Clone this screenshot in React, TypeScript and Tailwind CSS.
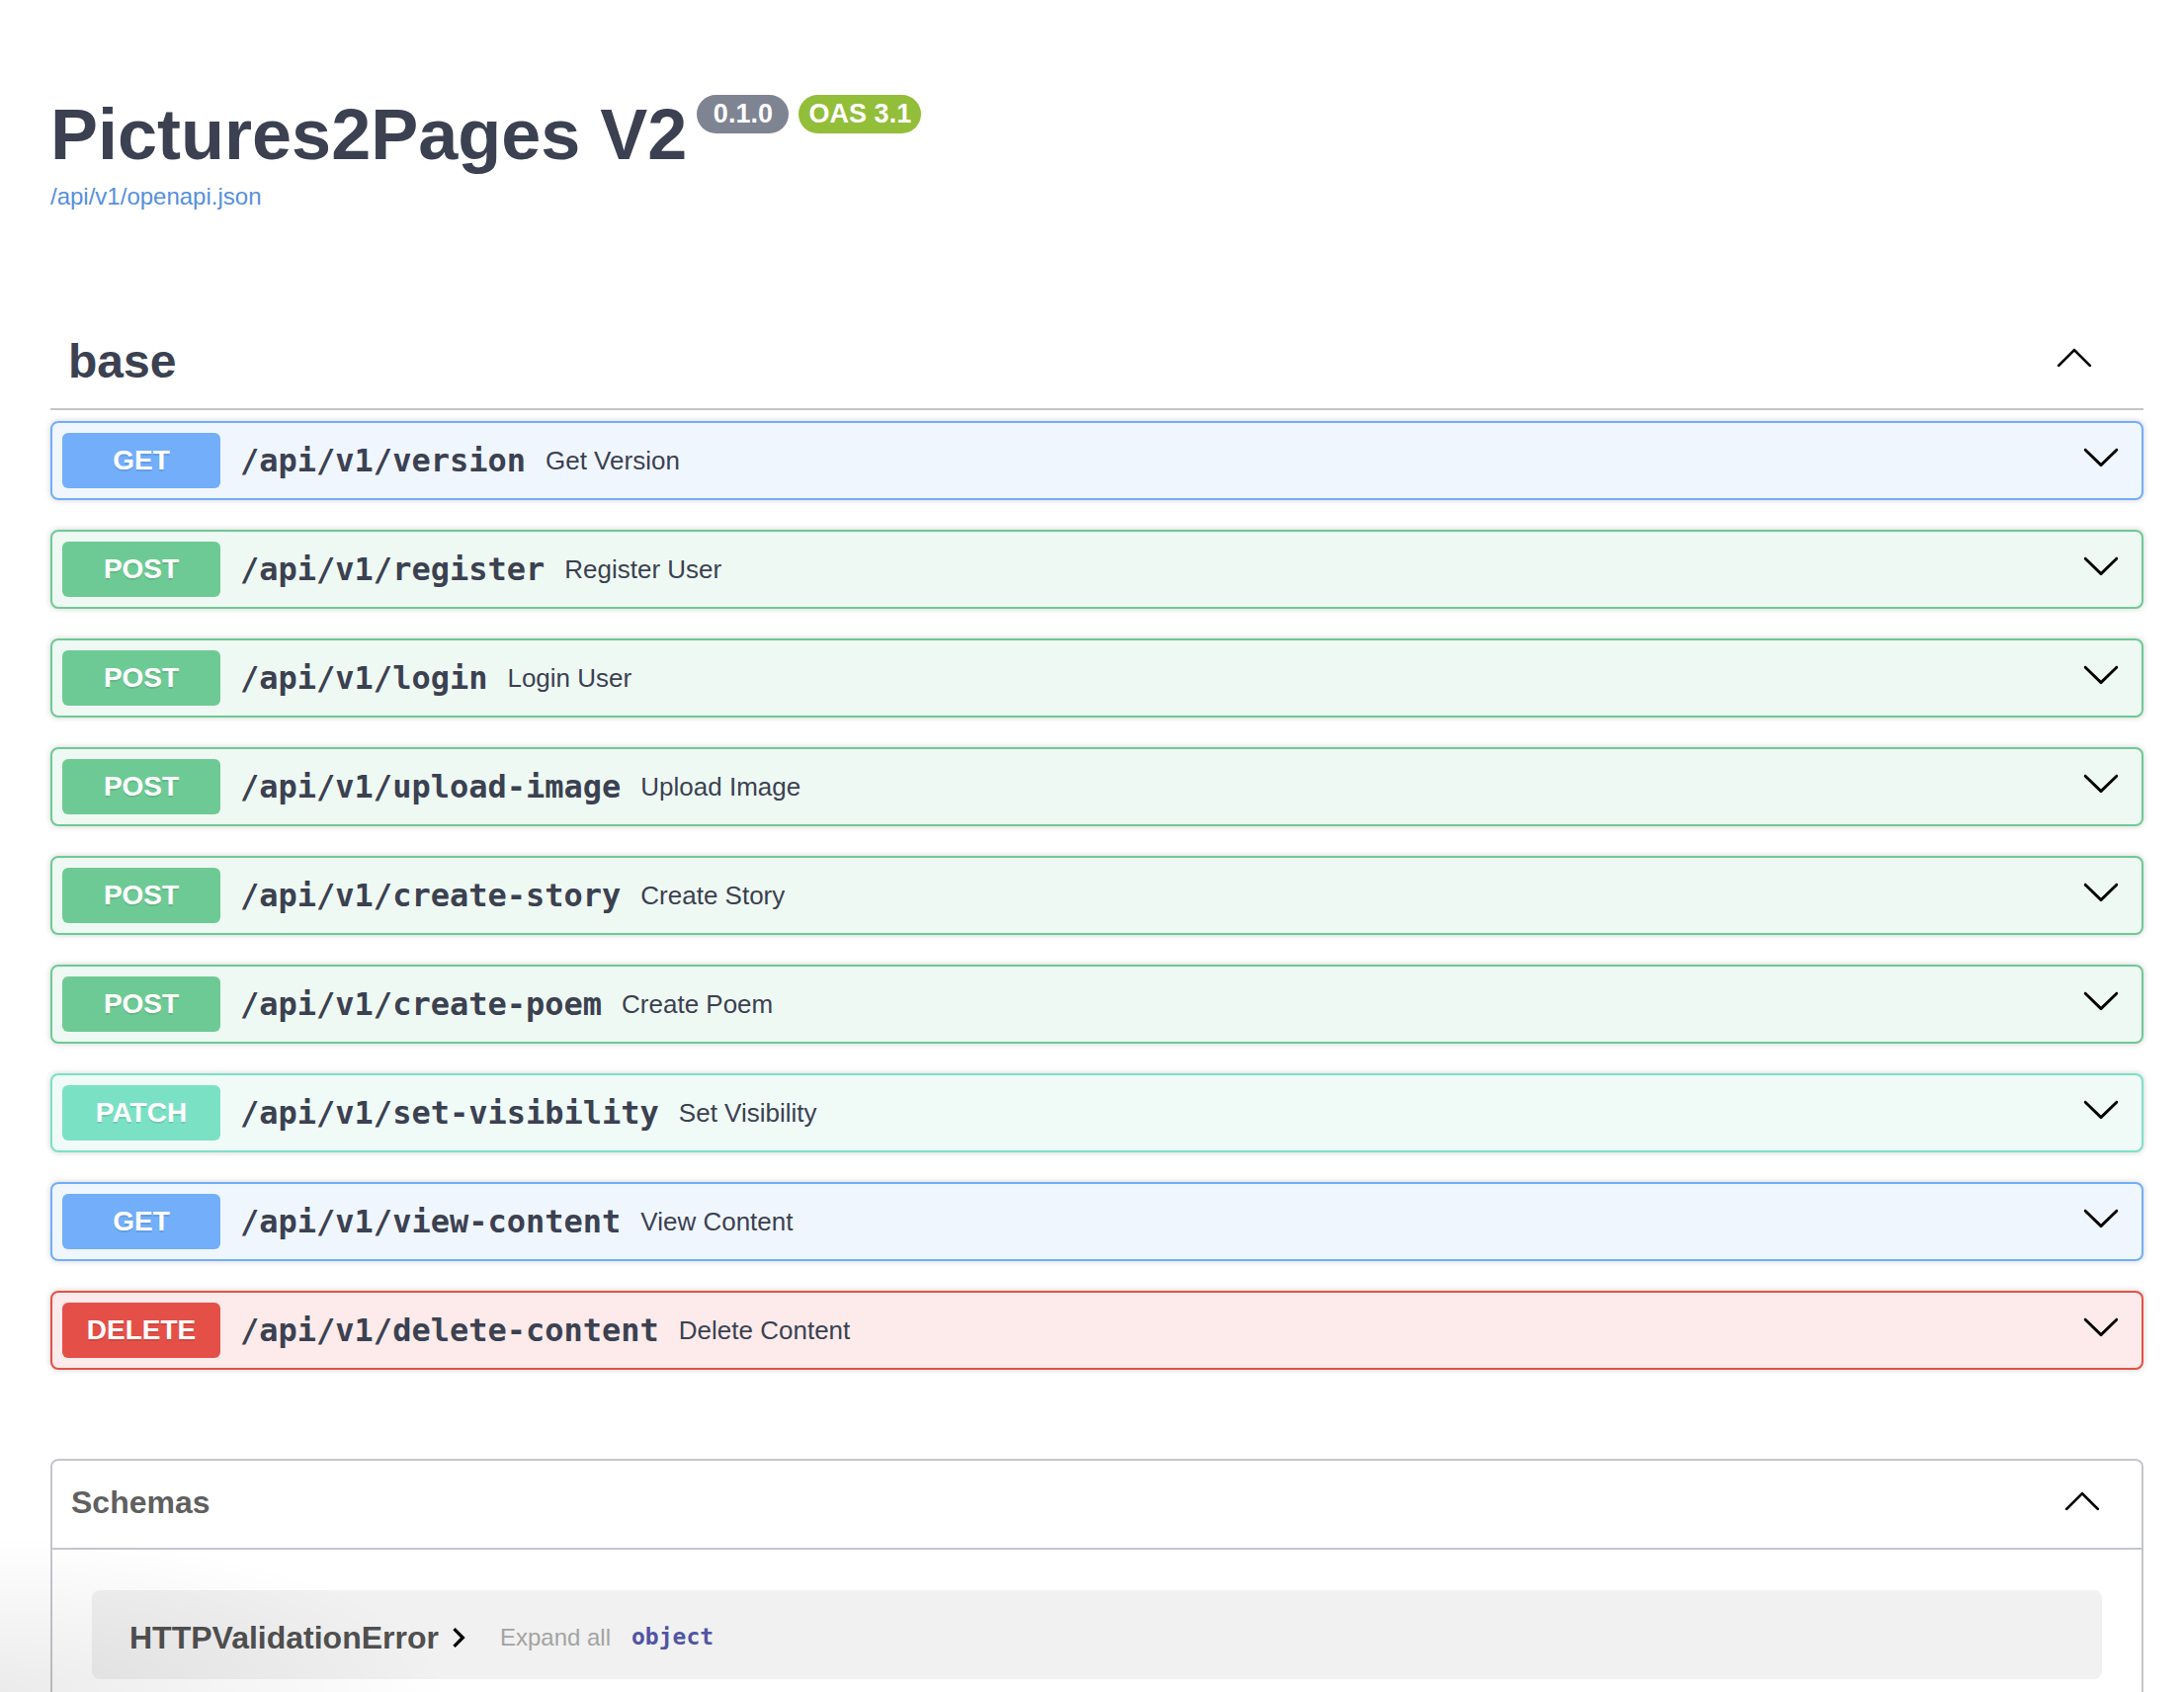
import React from "react";

type Method = "GET" | "POST" | "PATCH" | "DELETE";

const ops: { m: Method; path: string; desc: string }[] = [
  { m: "GET", path: "/api/v1/version", desc: "Get Version" },
  { m: "POST", path: "/api/v1/register", desc: "Register User" },
  { m: "POST", path: "/api/v1/login", desc: "Login User" },
  { m: "POST", path: "/api/v1/upload-image", desc: "Upload Image" },
  { m: "POST", path: "/api/v1/create-story", desc: "Create Story" },
  { m: "POST", path: "/api/v1/create-poem", desc: "Create Poem" },
  { m: "PATCH", path: "/api/v1/set-visibility", desc: "Set Visibility" },
  { m: "GET", path: "/api/v1/view-content", desc: "View Content" },
  { m: "DELETE", path: "/api/v1/delete-content", desc: "Delete Content" },
];

const styles: Record<Method, { block: string; badge: string }> = {
  GET: { block: "border-[#72aef9] bg-[#f0f6fe]", badge: "bg-[#72aef9]" },
  POST: { block: "border-[#6eca95] bg-[#eff9f3]", badge: "bg-[#6eca95]" },
  PATCH: { block: "border-[#7be1c5] bg-[#f0fbf8]", badge: "bg-[#7be1c5]" },
  DELETE: { block: "border-[#e45048] bg-[#fcebea]", badge: "bg-[#e45048]" },
};

function ArrowDown({ className = "" }: { className?: string }) {
  return (
    <svg width="40" height="40" viewBox="0 0 20 20" className={className} fill="#000">
      <path d="M17.418 6.109c.272-.268.709-.268.979 0s.271.701 0 .969l-7.908 7.83c-.27.268-.707.268-.979 0l-7.908-7.83c-.27-.268-.27-.701 0-.969.271-.268.709-.268.979 0L10 13.25l7.418-7.141z" />
    </svg>
  );
}

function ArrowUp({ className = "" }: { className?: string }) {
  return (
    <svg width="40" height="40" viewBox="0 0 20 20" className={className} fill="#000">
      <path d="M17.418 14.908c.272.268.709.268.979 0s.271-.701 0-.969l-7.908-7.83c-.27-.268-.707-.268-.979 0l-7.908 7.83c-.27.268-.27.701 0 .969.271.268.709.268.979 0L10 7.554l7.418 7.354z" />
    </svg>
  );
}

function ChevronRight() {
  return (
    <svg width="40" height="40" viewBox="0 0 24 24" fill="#000">
      <path d="M10 6L8.59 7.41 13.17 12l-4.58 4.59L10 18l6-6z" />
    </svg>
  );
}

export default function App() {
  return (
    <div className="relative h-[1712px] overflow-hidden bg-white font-[family-name:Liberation_Sans,Arial,sans-serif] text-[#3b4151]">
      <div className="pl-[51px] pr-[41px]">
        {/* Info */}
        <div className="pt-[95px]">
          <div className="flex items-start">
            <h2 className="m-0 text-[72px] leading-[83px] font-bold text-[#3b4151]">Pictures2Pages V2</h2>
            <span className="ml-[10px] mt-[1px] flex h-[39px] w-[93px] items-center justify-center rounded-full bg-[#7e8492] text-[27px] font-bold leading-none text-white">
              0.1.0
            </span>
            <span className="ml-[10px] mt-[1px] flex h-[39px] w-[124px] items-center justify-center rounded-full bg-[#92be39] text-[27px] font-bold leading-none text-white">
              OAS 3.1
            </span>
          </div>
          <a className="mt-[7px] block w-fit text-[24px] leading-[28px] text-[#568fde]">/api/v1/openapi.json</a>
        </div>

        {/* Tag section */}
        <div className="mt-[105px]">
          <div className="flex items-center justify-between border-b-2 border-[#c4c6cb] py-[20px] pl-[18px] pr-[50px]">
            <span className="text-[48px] leading-[55px] font-bold text-[#3b4151]">base</span>
            <ArrowUp className="-mt-[9px]" />
          </div>
          <div className="mt-[11px] flex flex-col gap-[30px]">
            {ops.map((op) => (
              <div
                key={op.path}
                className={`flex h-[80px] items-center rounded-[8px] border-2 p-[10px] shadow-[0_0_6px_rgba(0,0,0,0.19)] ${styles[op.m].block}`}
              >
                <div
                  className={`flex h-[56px] w-[160px] shrink-0 items-center justify-center rounded-[6px] text-[28px] font-bold text-white [text-shadow:0_2px_0_rgba(0,0,0,0.1)] ${styles[op.m].badge}`}
                >
                  {op.m}
                </div>
                <span className="px-[20px] font-[family-name:DejaVu_Sans_Mono,monospace] text-[32px] font-bold text-[#3b4151]">
                  {op.path}
                </span>
                <span className="flex-1 text-[26px] text-[#3b4151]">{op.desc}</span>
                <ArrowDown className="mr-[11px] -mt-[8px]" />
              </div>
            ))}
          </div>
        </div>

        {/* Schemas */}
        <div className="mt-[90px] rounded-[8px] border-2 border-[#c4c6cb]">
          <div className="flex h-[90px] items-center justify-between border-b-2 border-[#c4c6cb] pl-[19px] pr-[40px]">
            <span className="-mt-[4px] text-[32px] font-bold text-[#606060]">Schemas</span>
            <ArrowUp className="-mt-[8px]" />
          </div>
          <div className="px-[40px] pt-[41px] pb-[30px]">
            <div className="flex h-[90px] items-center rounded-[8px] bg-[#f1f1f1] pl-[38px] pt-[5px]">
              <span className="text-[32px] font-bold text-[#505050]">HTTPValidationError</span>
              <ChevronRight />
              <span className="ml-[22px] text-[24px] text-[#a3a3a3]">Expand all</span>
              <span className="ml-[21px] font-[family-name:DejaVu_Sans_Mono,monospace] text-[23px] font-bold text-[#5154a4]">
                object
              </span>
            </div>
          </div>
        </div>
      </div>
      <div className="pointer-events-none absolute bottom-0 left-0 h-[160px] w-[460px] bg-[radial-gradient(ellipse_at_bottom_left,rgba(0,0,0,0.08),rgba(0,0,0,0)_70%)]" />
    </div>
  );
}
